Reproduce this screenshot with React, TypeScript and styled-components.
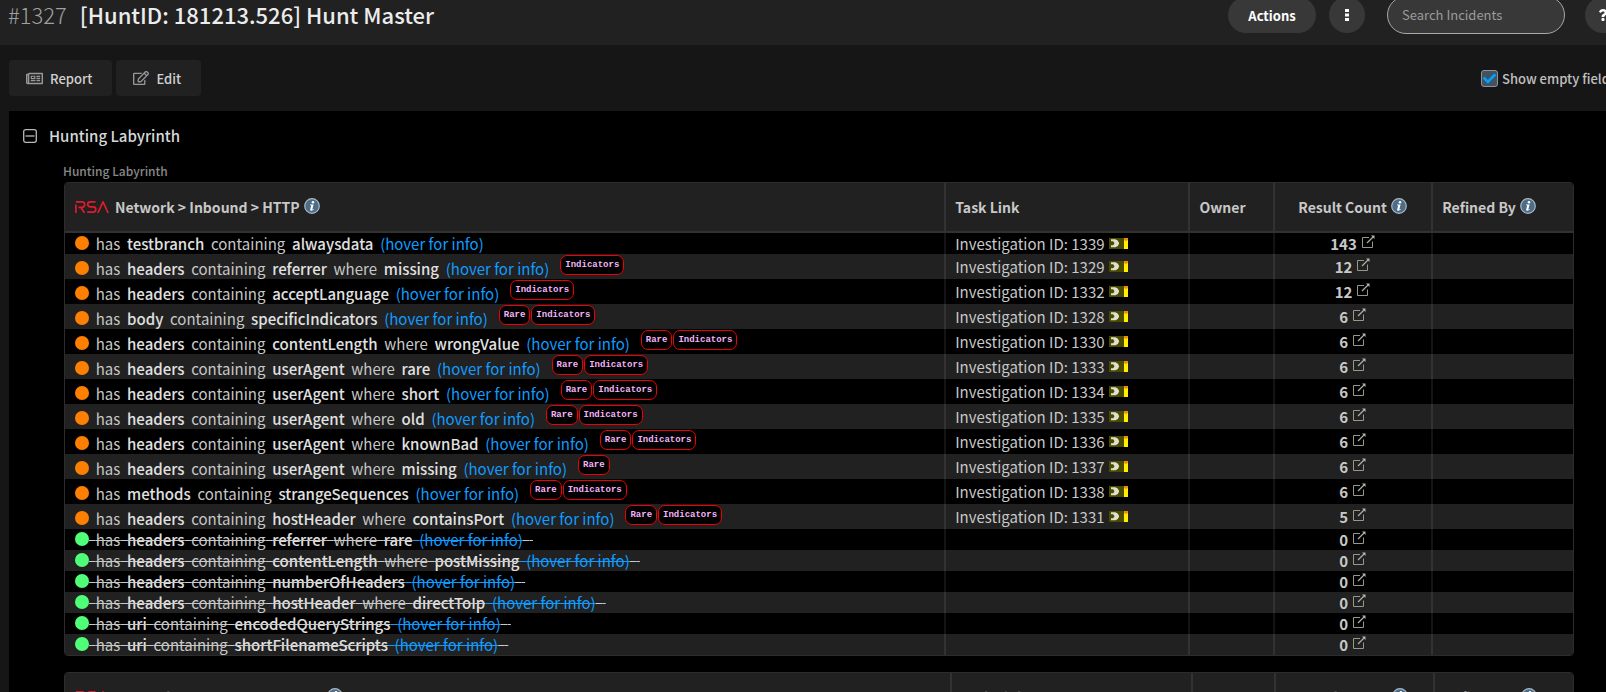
import React from "react";
import styled, { createGlobalStyle } from "styled-components";
import { FaRegNewspaper, FaRegEdit, FaCheck, FaQuestion } from "react-icons/fa";

const GlobalStyle = createGlobalStyle`
  * { box-sizing: border-box; }
  body {
    margin: 0;
    background: #000;
    color: #c8c8c8;
    font: 400 15px/21px "Noto Sans CJK SC", "Open Sans", sans-serif;
  }
  button, input { font-family: inherit; }
  a { color: #109cff; text-decoration: none; }
`;

const Viewport = styled.div`
  height: 100vh;
  overflow: hidden;
`;

/* The incident page runs a little wider than the window. */
const Page = styled.div`
  margin-right: -15px;
`;

const Header = styled.header`
  display: flex;
  align-items: center;
  justify-content: space-between;
  height: 60px;
  margin-top: -15px;
  padding-left: 8px;
  background: #212121;
`;

const Title = styled.h1`
  display: flex;
  gap: 13px;
  margin: 0;
  padding-bottom: 3px;
  font-size: 22px;
  font-weight: 500;
  line-height: 30px;
  color: #ececec;
  white-space: nowrap;
`;

const IncidentNumber = styled.span`
  font-weight: 300;
  color: #a0a0a0;
`;

const HeaderActions = styled.div`
  display: flex;
  align-items: center;
`;

const Pill = styled.button<{ $round?: boolean; $gap: number }>`
  display: flex;
  align-items: center;
  justify-content: center;
  width: ${(p) => (p.$round ? 36 : 88)}px;
  height: 36px;
  margin-left: ${(p) => p.$gap}px;
  padding: 0;
  border: 0;
  border-radius: 18px;
  background: #383838;
  color: #fff;
  font-size: 13px;
  font-weight: 700;
`;

const SearchBox = styled.input`
  width: 178px;
  height: 38px;
  margin-left: 22px;
  padding: 0 14px 2px;
  border: 1px solid #a8a8a8;
  border-radius: 19px;
  background: #383838;
  color: #fff;
  font-size: 13px;
  &::placeholder { color: #9c9c9c; opacity: 1; }
`;

const Toolbar = styled.div`
  display: flex;
  align-items: center;
  gap: 4px;
  padding: 15px 0 15px 9px;
  background: #161616;
`;

const ToolButton = styled.button`
  display: flex;
  align-items: center;
  gap: 7px;
  height: 36px;
  padding: 0 20px 0 17px;
  border: 0;
  border-radius: 4px;
  background: #212121;
  color: #d0d0d0;
  font-size: 13px;
  font-weight: 500;
  svg { color: #999; }
`;

const EmptyToggle = styled.label`
  display: flex;
  align-items: center;
  gap: 4px;
  width: 140px;
  margin-left: auto;
  color: #c0c0c0;
  font-size: 13px;
  font-weight: 500;
  white-space: nowrap;
`;

const CheckWrap = styled.span`
  position: relative;
  display: flex;
  svg {
    position: absolute;
    inset: 2px;
    color: #00a2ff;
    pointer-events: none;
  }
`;

const CheckInput = styled.input`
  appearance: none;
  width: 17px;
  height: 17px;
  margin: 0;
  border: 1px solid #8a949c;
  border-radius: 3px;
  background: #425260;
`;

const Body = styled.div`
  padding-left: 9px;
  background: #161616;
`;

const Panel = styled.main`
  padding: 14px 47px 40px 14px;
  background: #000;
`;

const SectionHead = styled.div`
  display: flex;
  align-items: center;
  gap: 12px;
`;

const SectionTitle = styled.h2`
  margin: 0;
  font-size: 15px;
  font-weight: 500;
  line-height: 22px;
  color: #d8d8d8;
`;

const Collapse = styled.button`
  display: flex;
  padding: 0;
  border: 0;
  background: none;
  color: #b8b8b8;
`;

const Field = styled.section`
  margin: 14px 0 0 41px;
`;

const FieldLabel = styled.h3`
  margin: 0 0 1px -1px;
  font-size: 12px;
  font-weight: 500;
  line-height: 20px;
  color: #888;
`;

const HuntTable = styled.table`
  width: 100%;
  margin-bottom: 16px;
  border: 1px solid #2c2c2c;
  border-radius: 4px;
  border-collapse: separate;
  border-spacing: 0;
  table-layout: fixed;
  overflow: hidden;
`;

const Th = styled.th`
  height: 50px;
  padding: 0 10px;
  border-bottom: 2px solid #323232;
  background: #212121;
  color: #c8c8c8;
  font-size: 14px;
  font-weight: 700;
  text-align: left;
  & + & {
    padding-left: 9px;
    border-left: 2px solid #323232;
  }
`;

const HeadLabel = styled.span<{ $center?: boolean }>`
  display: flex;
  align-items: center;
  justify-content: ${(p) => (p.$center ? "center" : "flex-start")};
  gap: 4px;
  white-space: nowrap;
`;

const InfoSlot = styled.span`
  display: flex;
  padding-bottom: 3px;
`;

const LogoSlot = styled.span`
  display: flex;
  padding: 0 2px 1px 0;
`;

const Tr = styled.tr`
  &:nth-child(even) { background: #212121; }
`;

const Td = styled.td`
  height: 21px;
  padding: 0 10px;
  white-space: nowrap;
  & + & {
    padding-left: 9px;
    border-left: 2px solid rgba(255, 255, 255, 0.08);
  }
`;

const RuleLine = styled.div`
  display: flex;
  align-items: flex-end;
`;

const Dot = styled.span<{ $hit: boolean }>`
  display: inline-block;
  width: 14px;
  height: 14px;
  border-radius: 50%;
  background: ${(p) => (p.$hit ? "#ff8000" : "#50ff78")};
`;

const Run = styled.span<{ $struck: boolean }>`
  text-decoration: ${(p) => (p.$struck ? "line-through" : "none")};
  b {
    font-weight: 500;
    color: #e0e0e0;
  }
`;

const HoverLink = styled.a<{ $struck: boolean }>`
  text-decoration: ${(p) => (p.$struck ? "line-through" : "none")};
`;

const Tags = styled.span`
  display: flex;
  gap: 1px;
  margin: 1px 0 4px 11px;
`;

const Tag = styled.span`
  padding: 0 4px;
  border: 1px solid #f00000;
  border-radius: 7px;
  background: #000;
  color: #f4b4f8;
  font: 700 9px/18px "Liberation Mono", monospace;
`;

const LinkCell = styled.span`
  display: flex;
  align-items: center;
  gap: 4px;
`;

const Count = styled.span`
  display: flex;
  align-items: center;
  justify-content: center;
  gap: 5px;
  font-weight: 700;
  a { display: flex; padding-bottom: 4px; }
`;

const InfoIcon = () => (
  <InfoSlot>
    <svg width="16" height="16" viewBox="0 0 16 16" role="img" aria-label="More information">
      <circle cx="8" cy="8" r="7.3" fill="#4c6c88" stroke="#a9b8c2" strokeWidth="1.2" />
      <circle cx="9" cy="4.2" r="1.3" fill="#fff" />
      <path d="M6 6.4h3.6l-1.2 4.7c-.1.5.2.6 1.2-.1l.2.6c-1.2 1.200-4 1.600-3.600-.2L7.200 7.200H5.900z" fill="#fff" />
    </svg>
  </InfoSlot>
);

const RsaLogo = () => (
  <LogoSlot>
    <svg width="34" height="12" viewBox="0 0 34 12" role="img" aria-label="RSA" fill="none" stroke="#e01b2e" strokeWidth="1.7">
      <path d="M.9 12V3.500M.9 .9H7a2.700 2.700 0 0 1 0 5.400H3.500M6 6.500 9.500 12" />
      <path d="M20.500 .9h-5.300a2.500 2.500 0 0 0 0 5h3a2.600 2.600 0 0 1 0 5.200h-6" />
      <path d="M22.800 12 28 .9l5.200 11.100" />
    </svg>
  </LogoSlot>
);

const InvestigationBadge = () => (
  <svg width="19" height="11" viewBox="0 0 19 11" aria-hidden="true">
    <rect width="19" height="11" fill="#4a4a00" />
    <path d="M2 1.200h4.500Q9.500 2 10.200 5.200 9.500 8.500 6.500 9.300H2V7.300h2.200l1.300-2.100-1.300-2H2z" fill="#dfe0d0" />
    <rect x="15" width="4" height="11" fill="#ffee00" />
    <path d="M15 0h4v2l-2 1-2-1z" fill="#f08a10" />
  </svg>
);

const ExternalIcon = () => (
  <svg width="13" height="13" viewBox="0 0 13 13" fill="none" aria-hidden="true">
    <path d="M7 2.500H.5v10h10V6.500" stroke="#98988a" />
    <path d="M5 8l6-6" stroke="#a8b0a8" strokeWidth="1.200" />
    <path d="M9 .5h3.500V4z" fill="#b8b8b0" />
  </svg>
);

type Rule = { text: string[]; tags?: string[]; id?: number; count: number };

/* Odd entries of text are the emphasised words. */
const rules: Rule[] = [
  { text: ["has", "testbranch", "containing", "alwaysdata"], id: 1339, count: 143 },
  { text: ["has", "headers", "containing", "referrer", "where", "missing"], tags: ["Indicators"], id: 1329, count: 12 },
  { text: ["has", "headers", "containing", "acceptLanguage"], tags: ["Indicators"], id: 1332, count: 12 },
  { text: ["has", "body", "containing", "specificIndicators"], tags: ["Rare", "Indicators"], id: 1328, count: 6 },
  { text: ["has", "headers", "containing", "contentLength", "where", "wrongValue"], tags: ["Rare", "Indicators"], id: 1330, count: 6 },
  { text: ["has", "headers", "containing", "userAgent", "where", "rare"], tags: ["Rare", "Indicators"], id: 1333, count: 6 },
  { text: ["has", "headers", "containing", "userAgent", "where", "short"], tags: ["Rare", "Indicators"], id: 1334, count: 6 },
  { text: ["has", "headers", "containing", "userAgent", "where", "old"], tags: ["Rare", "Indicators"], id: 1335, count: 6 },
  { text: ["has", "headers", "containing", "userAgent", "where", "knownBad"], tags: ["Rare", "Indicators"], id: 1336, count: 6 },
  { text: ["has", "headers", "containing", "userAgent", "where", "missing"], tags: ["Rare"], id: 1337, count: 6 },
  { text: ["has", "methods", "containing", "strangeSequences"], tags: ["Rare", "Indicators"], id: 1338, count: 6 },
  { text: ["has", "headers", "containing", "hostHeader", "where", "containsPort"], tags: ["Rare", "Indicators"], id: 1331, count: 5 },
  { text: ["has", "headers", "containing", "referrer", "where", "rare"], count: 0 },
  { text: ["has", "headers", "containing", "contentLength", "where", "postMissing"], count: 0 },
  { text: ["has", "headers", "containing", "numberOfHeaders"], count: 0 },
  { text: ["has", "headers", "containing", "hostHeader", "where", "directToIp"], count: 0 },
  { text: ["has", "uri", "containing", "encodedQueryStrings"], count: 0 },
  { text: ["has", "uri", "containing", "shortFilenameScripts"], count: 0 },
];

const GAP = "\u00a0\u00a0";

const RuleRow = ({ rule }: { rule: Rule }) => {
  const struck = rule.count === 0;
  return (
    <Tr>
      <Td>
        <RuleLine>
          <span>
            <Dot $hit={!struck} />
            <Run $struck={struck}>
              {rule.text.map((word, i) => (
                <React.Fragment key={i}>
                  {GAP}
                  {i % 2 ? <b>{word}</b> : word}
                </React.Fragment>
              ))}
            </Run>
            <HoverLink href="#info" $struck={struck}>{GAP}(hover for info)</HoverLink>
            {struck && <Run $struck>{GAP}{"\u00a0"}</Run>}
          </span>
          {rule.tags && <Tags>{rule.tags.map((t) => <Tag key={t}>{t}</Tag>)}</Tags>}
        </RuleLine>
      </Td>
      <Td>{rule.id && <LinkCell>Investigation ID: {rule.id}<InvestigationBadge /></LinkCell>}</Td>
      <Td />
      <Td>
        <Count>
          {rule.count}
          <a href="#results" aria-label="Open results"><ExternalIcon /></a>
        </Count>
      </Td>
      <Td />
    </Tr>
  );
};

type TableProps = { title: string; widths: string[]; rows: Rule[] };

const Hunt = ({ title, widths, rows }: TableProps) => (
  <HuntTable>
    <colgroup>{widths.map((w, i) => <col key={i} width={w} />)}</colgroup>
    <thead>
      <tr>
        <Th><HeadLabel><RsaLogo />{title}<InfoIcon /></HeadLabel></Th>
        <Th>Task Link</Th>
        <Th>Owner</Th>
        <Th><HeadLabel $center>Result Count<InfoIcon /></HeadLabel></Th>
        <Th><HeadLabel>Refined By<InfoIcon /></HeadLabel></Th>
      </tr>
    </thead>
    <tbody>{rows.map((r, i) => <RuleRow key={i} rule={r} />)}</tbody>
  </HuntTable>
);

export default function App() {
  return (
    <Viewport>
      <GlobalStyle />
      <Page>
        <Header>
          <Title><IncidentNumber>#1327</IncidentNumber>[HuntID: 181213.526] Hunt Master</Title>
          <HeaderActions>
            <Pill $gap={0}>Actions</Pill>
            <Pill $round $gap={13} aria-label="More">
              <svg width="4" height="12" viewBox="0 0 4 12" fill="#fff" aria-hidden="true">
                <path d="M0 0h4v3H0zM0 4.500h4v3H0zM0 9h4v3H0z" />
              </svg>
            </Pill>
            <SearchBox type="search" placeholder="Search Incidents" aria-label="Search Incidents" />
            <Pill $round $gap={20} aria-label="Help"><FaQuestion size={12} /></Pill>
          </HeaderActions>
        </Header>
        <Toolbar>
          <ToolButton><FaRegNewspaper size={17} />Report</ToolButton>
          <ToolButton><FaRegEdit size={16} />Edit</ToolButton>
          <EmptyToggle>
            <CheckWrap><CheckInput type="checkbox" defaultChecked /><FaCheck size={13} /></CheckWrap>
            Show empty fields
          </EmptyToggle>
        </Toolbar>
        <Body>
          <Panel>
            <SectionHead>
              <Collapse aria-label="Collapse section">
                <svg width="14" height="14" viewBox="0 0 14 14" fill="none" stroke="currentColor" strokeWidth="1.300" aria-hidden="true">
                  <rect x=".7" y=".7" width="12.600" height="12.600" rx="2" />
                  <path d="M2.500 7h9" />
                </svg>
              </Collapse>
              <SectionTitle>Hunting Labyrinth</SectionTitle>
            </SectionHead>
            <Field>
              <FieldLabel>Hunting Labyrinth</FieldLabel>
              <Hunt title="Network > Inbound > HTTP" widths={["58.3%", "16.2%", "5.6%", "10.5%", "9.4%"]} rows={rules} />
              <Hunt title="Network > Inbound > TCP/UDP" widths={["58.7%", "16%", "5.5%", "10.5%", "9.3%"]} rows={[]} />
            </Field>
          </Panel>
        </Body>
      </Page>
    </Viewport>
  );
}
